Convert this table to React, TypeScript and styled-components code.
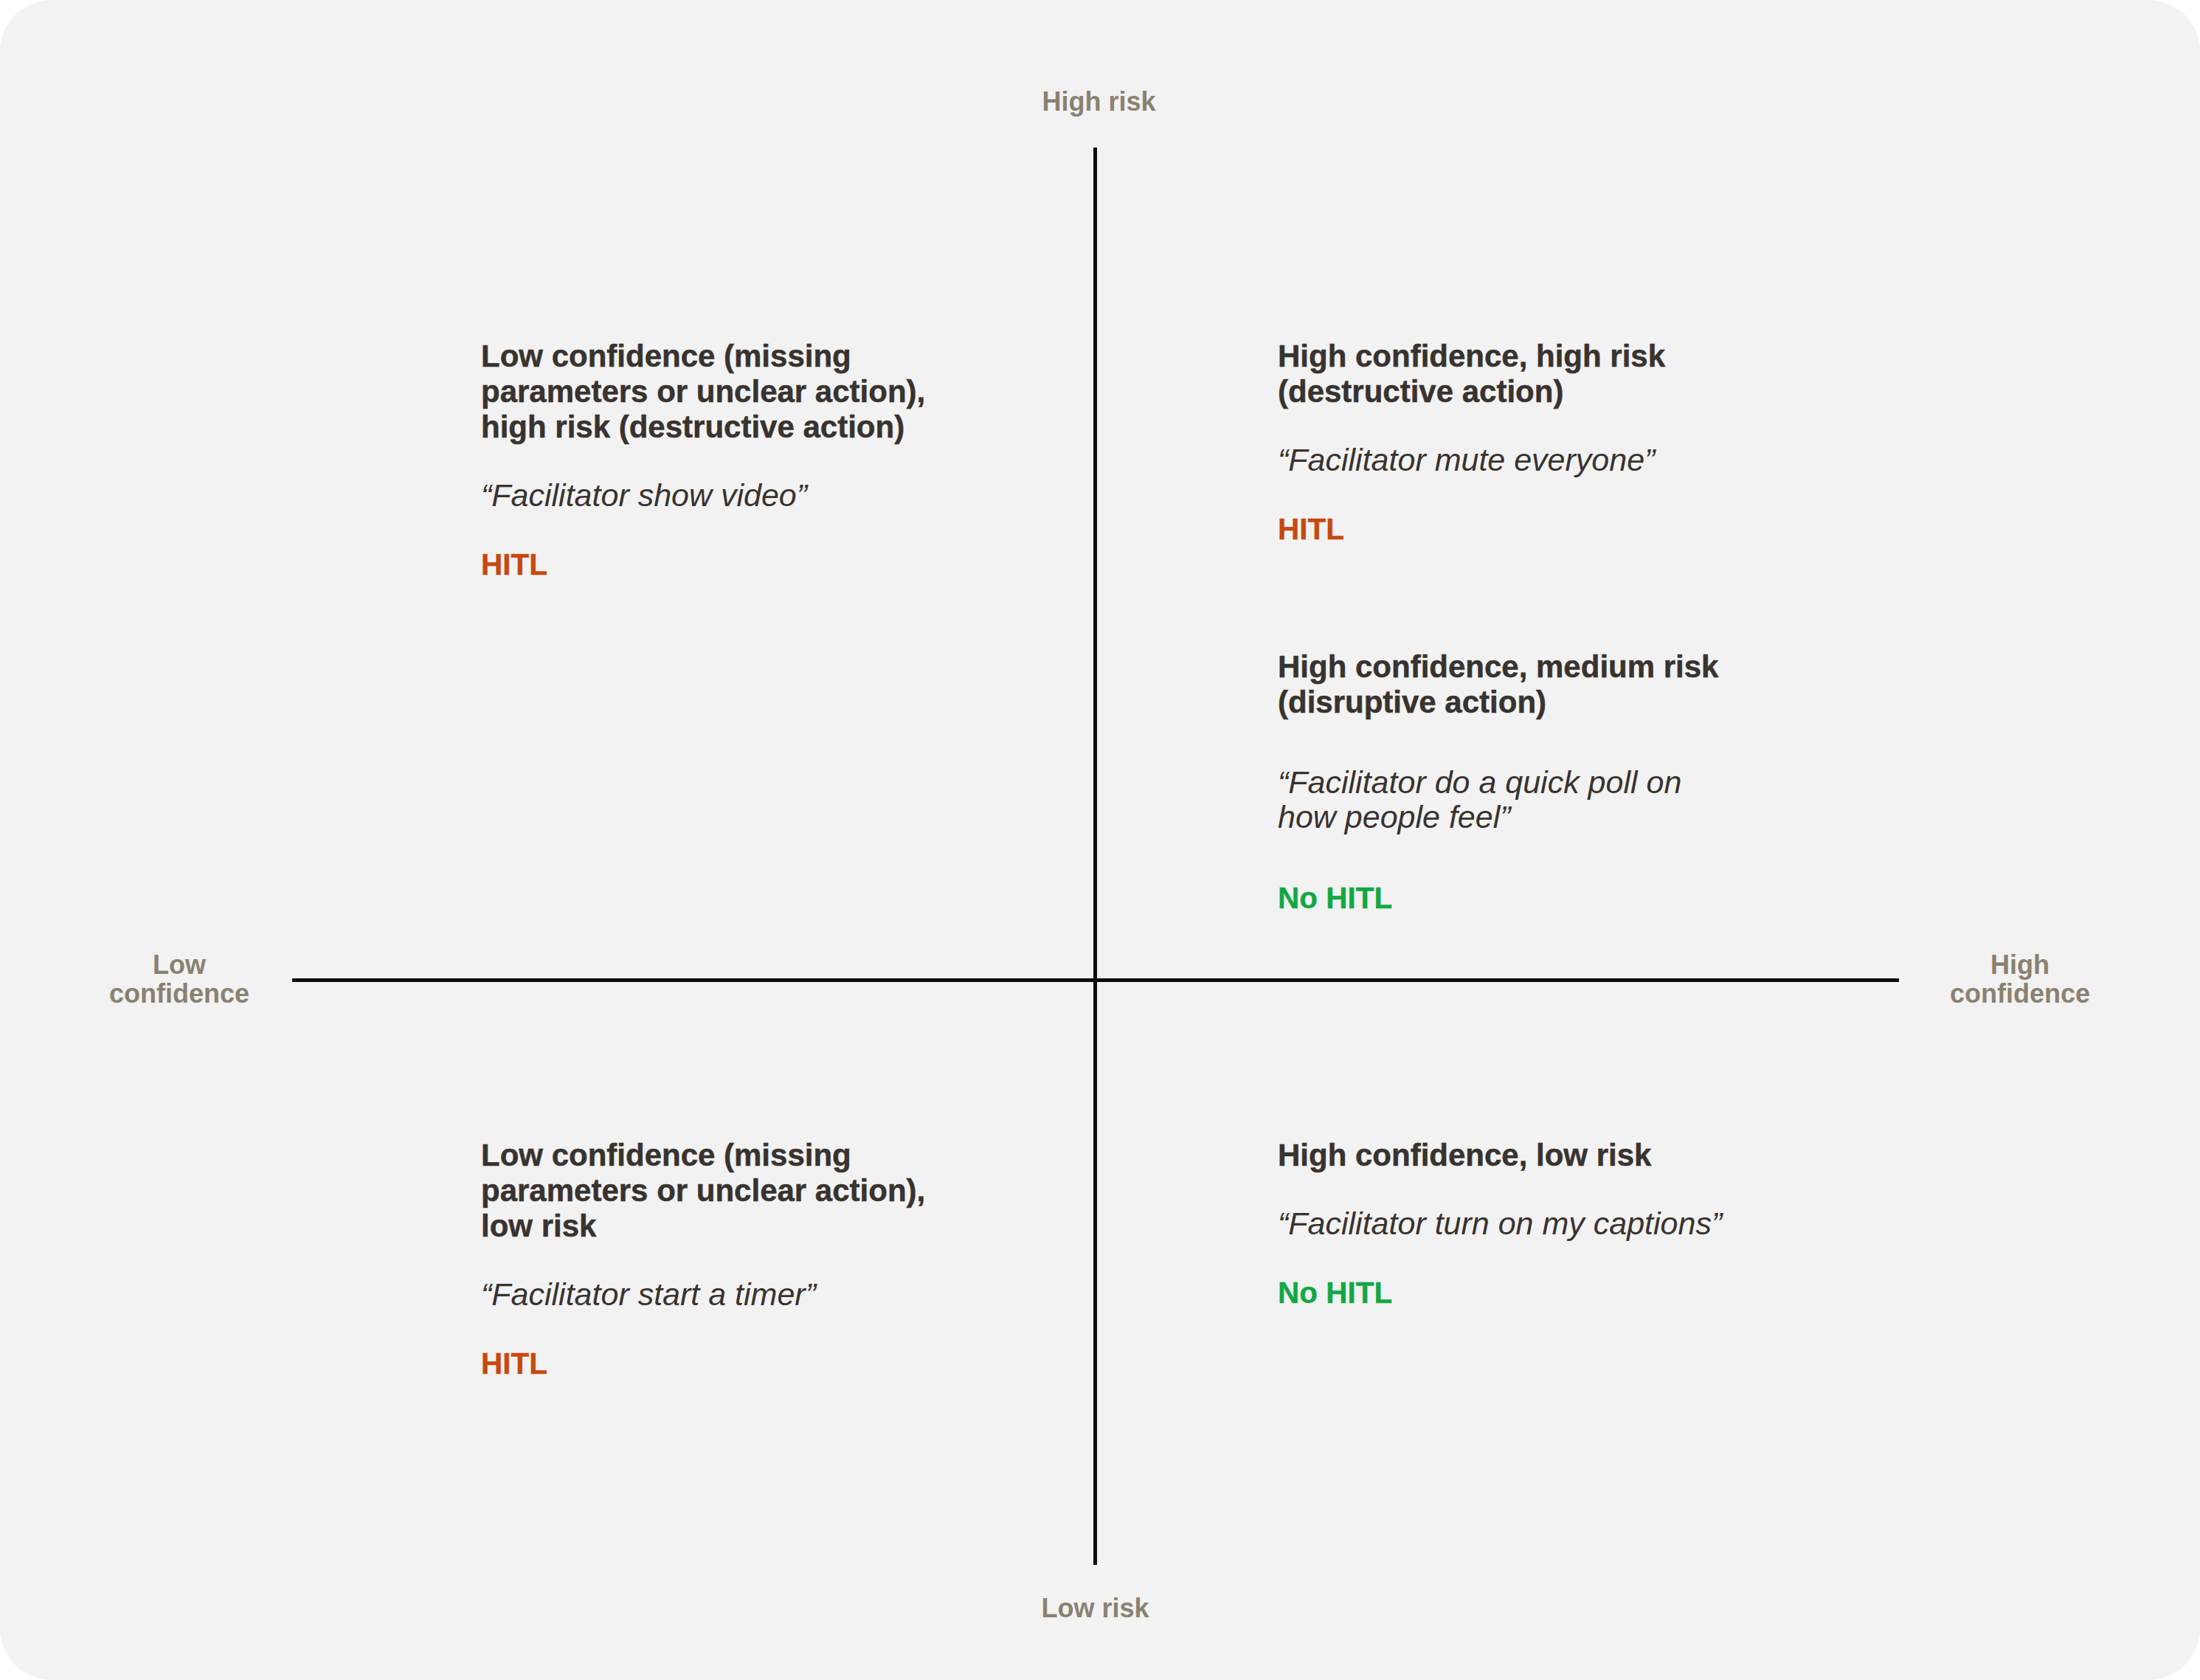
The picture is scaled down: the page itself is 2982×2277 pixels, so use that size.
import React from "react";
import styled, { createGlobalStyle } from "styled-components";

const GlobalStyle = createGlobalStyle`
  html, body {
    margin: 0;
    padding: 0;
    background: #ffffff;
  }
  body {
    font-family: "Liberation Sans", Arial, sans-serif;
  }
`;

const Panel = styled.main`
  width: 2982px;
  height: 2277px;
  background: #f2f2f2;
  border-radius: 70px;
  display: grid;
  grid-template-columns: 396px 1086px 5px 1087px 1fr;
  grid-template-rows: 200px 1126px 5px 790px 1fr;
  overflow: hidden;
`;

const AxisLabel = styled.div`
  font-size: 36px;
  line-height: 38.5px;
  font-weight: 700;
  color: #8a8171;
  text-align: center;
  white-space: nowrap;
`;

const TopLabel = styled(AxisLabel)`
  grid-row: 1;
  grid-column: 3;
  justify-self: center;
  align-self: start;
  padding-top: 119px;
  padding-left: 10px;
`;

const BottomLabel = styled(AxisLabel)`
  grid-row: 5;
  grid-column: 3;
  justify-self: center;
  align-self: start;
  padding-top: 40px;
`;

const SideLabel = styled(AxisLabel)<{ $side: "left" | "right" }>`
  grid-row: 3;
  grid-column: ${(p) => (p.$side === "left" ? 1 : 5)};
  align-self: center;
  justify-self: ${(p) => (p.$side === "left" ? "end" : "start")};
  margin-top: -2px;
  margin-right: ${(p) => (p.$side === "left" ? "58px" : "0")};
  margin-left: ${(p) => (p.$side === "right" ? "69px" : "0")};
`;

const VAxis = styled.div`
  grid-row: 2 / 5;
  grid-column: 3;
  background: #0d0d0d;
`;

const HAxis = styled.div`
  grid-row: 3;
  grid-column: 2 / 5;
  background: #0d0d0d;
`;

const Quadrant = styled.section<{ $col: 2 | 4; $row: 2 | 4 }>`
  grid-column: ${(p) => p.$col};
  grid-row: ${(p) => p.$row};
  display: flex;
  flex-direction: column;
  gap: 139px;
  padding-left: ${(p) => (p.$col === 2 ? "256px" : "245px")};
  padding-top: ${(p) => (p.$row === 2 ? "259px" : "211px")};
`;

const Case = styled.div<{ $spread?: boolean }>`
  display: flex;
  flex-direction: column;
  align-items: flex-start;
  gap: ${(p) => (p.$spread ? "61px" : "45px")};
`;

const Title = styled.h3`
  margin: 0;
  font-size: 42px;
  line-height: 48px;
  font-weight: 700;
  color: #38332f;
  white-space: nowrap;
  -webkit-text-stroke: 0.5px #38332f;
`;

const Quote = styled.p`
  margin: 0;
  font-size: 43px;
  line-height: 47px;
  font-style: italic;
  font-weight: 400;
  color: #38332f;
  white-space: nowrap;
`;

const Verdict = styled.span<{ $hitl: boolean }>`
  font-size: 40.5px;
  line-height: 48px;
  font-weight: 700;
  margin-top: 1px;
  color: ${(p) => (p.$hitl ? "#c6490f" : "#13a744")};
  -webkit-text-stroke: 0.4px ${(p) => (p.$hitl ? "#c6490f" : "#13a744")};
`;

type Item = {
  title: React.ReactNode;
  quote: React.ReactNode;
  hitl: boolean;
  spread?: boolean;
};

const CaseBlock: React.FC<Item> = ({ title, quote, hitl, spread }) => (
  <Case $spread={spread}>
    <Title>{title}</Title>
    <Quote>{quote}</Quote>
    <Verdict $hitl={hitl}>{hitl ? "HITL" : "No HITL"}</Verdict>
  </Case>
);

function App() {
  return (
    <>
      <GlobalStyle />
      <Panel>
        <TopLabel>High risk</TopLabel>

        <Quadrant $col={2} $row={2}>
          <CaseBlock
            title={
              <>
                Low confidence (missing
                <br />
                parameters or unclear action),
                <br />
                high risk (destructive action)
              </>
            }
            quote="“Facilitator show video”"
            hitl
          />
        </Quadrant>

        <VAxis />

        <Quadrant $col={4} $row={2}>
          <CaseBlock
            title={
              <>
                High confidence, high risk
                <br />
                (destructive action)
              </>
            }
            quote="“Facilitator mute everyone”"
            hitl
          />
          <CaseBlock
            spread
            title={
              <>
                High confidence, medium risk
                <br />
                (disruptive action)
              </>
            }
            quote={
              <>
                “Facilitator do a quick poll on
                <br />
                how people feel”
              </>
            }
            hitl={false}
          />
        </Quadrant>

        <SideLabel $side="left">
          Low
          <br />
          confidence
        </SideLabel>
        <HAxis />
        <SideLabel $side="right">
          High
          <br />
          confidence
        </SideLabel>

        <Quadrant $col={2} $row={4}>
          <CaseBlock
            title={
              <>
                Low confidence (missing
                <br />
                parameters or unclear action),
                <br />
                low risk
              </>
            }
            quote="“Facilitator start a timer”"
            hitl
          />
        </Quadrant>

        <Quadrant $col={4} $row={4}>
          <CaseBlock
            title="High confidence, low risk"
            quote="“Facilitator turn on my captions”"
            hitl={false}
          />
        </Quadrant>

        <BottomLabel>Low risk</BottomLabel>
      </Panel>
    </>
  );
}

export default App;
